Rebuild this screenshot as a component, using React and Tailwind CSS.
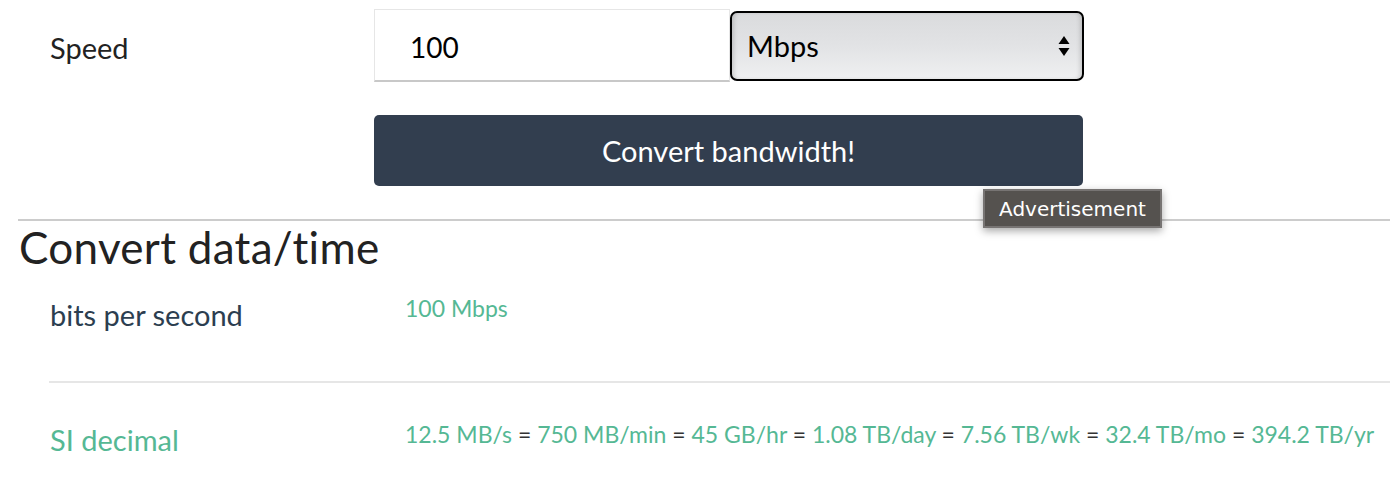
import React from "react";

export default function App() {
  const green = "text-[#55b894]";
  const parts = ["12.5 MB/s", "750 MB/min", "45 GB/hr", "1.08 TB/day", "7.56 TB/wk", "32.4 TB/mo", "394.2 TB/yr"];
  return (
    <div className="w-[1390px] h-[490px] bg-white overflow-hidden relative font-['Lato','Noto_Sans',sans-serif]">
      <div className="flex items-center pt-[9px] pl-[50px]">
        <div className="w-[324px] text-[29px] text-[#222] leading-none pt-[3px]">Speed</div>
        <div className="w-[356px] h-[73px] border border-[#e6e6e6] border-b-2 border-b-[#c8c8c8] flex items-center pl-[35px] pt-[3px] text-[28px] text-black">100</div>
        <div className="w-[354px] h-[70px] rounded-[7px] border-2 border-black bg-gradient-to-b from-[#dadbdd] via-[#e2e3e5] to-[#eff0f1] shadow-[inset_4px_0_4px_-2px_rgba(0,0,0,0.15),inset_-4px_0_4px_-2px_rgba(0,0,0,0.15)] flex items-center justify-between pl-[15px] pr-[12px] text-[29px] text-black">
          <span>Mbps</span>
          <svg width="12" height="24" viewBox="0 0 12 24">
            <path d="M6 2 L11.5 10 L0.5 10 Z" fill="#000" />
            <path d="M0.5 14 L11.5 14 L6 22 Z" fill="#000" />
          </svg>
        </div>
      </div>
      <div className="pl-[374px] pt-[33px]">
        <div className="w-[709px] h-[71px] rounded-[5px] bg-[#323e4f] flex items-center justify-center text-white text-[29px] pt-[1px]">Convert bandwidth!</div>
      </div>
      <div className="ml-[18px] mt-[33px] border-t-2 border-[#cccccc]"></div>
      <div className="pl-[19px] text-[44px] leading-none text-[#222] mt-[4px] tracking-[0.3px]">Convert data/time</div>
      <div className="flex pl-[50px] mt-[27px] h-[85px]">
        <div className="w-[355px] text-[29px] text-[#2c3e50] leading-none pt-[4px]">bits per second</div>
        <div className={`text-[23px] leading-none pt-[1px] ${green}`}>100 Mbps</div>
      </div>
      <div className="ml-[49px] border-t-2 border-[#e6e6e6]"></div>
      <div className="flex pl-[50px] mt-[38px]">
        <div className={`w-[355px] text-[29px] leading-none pt-[4px] ${green}`}>SI decimal</div>
        <div className="text-[23px] leading-none whitespace-nowrap pt-[2px]">
          {parts.map((p, i) => (
            <span key={i}>
              {i > 0 && <span className="text-[#333]"> = </span>}
              <span className={green}>{p}</span>
            </span>
          ))}
        </div>
      </div>
      <div className="absolute left-[983px] top-[189px] w-[179px] h-[39px] bg-[#55524f] border-2 border-[#777473] shadow-[0_3px_8px_rgba(0,0,0,0.35)] flex items-center justify-center text-white text-[20px] font-['DejaVu_Sans',sans-serif]">Advertisement</div>
    </div>
  );
}
